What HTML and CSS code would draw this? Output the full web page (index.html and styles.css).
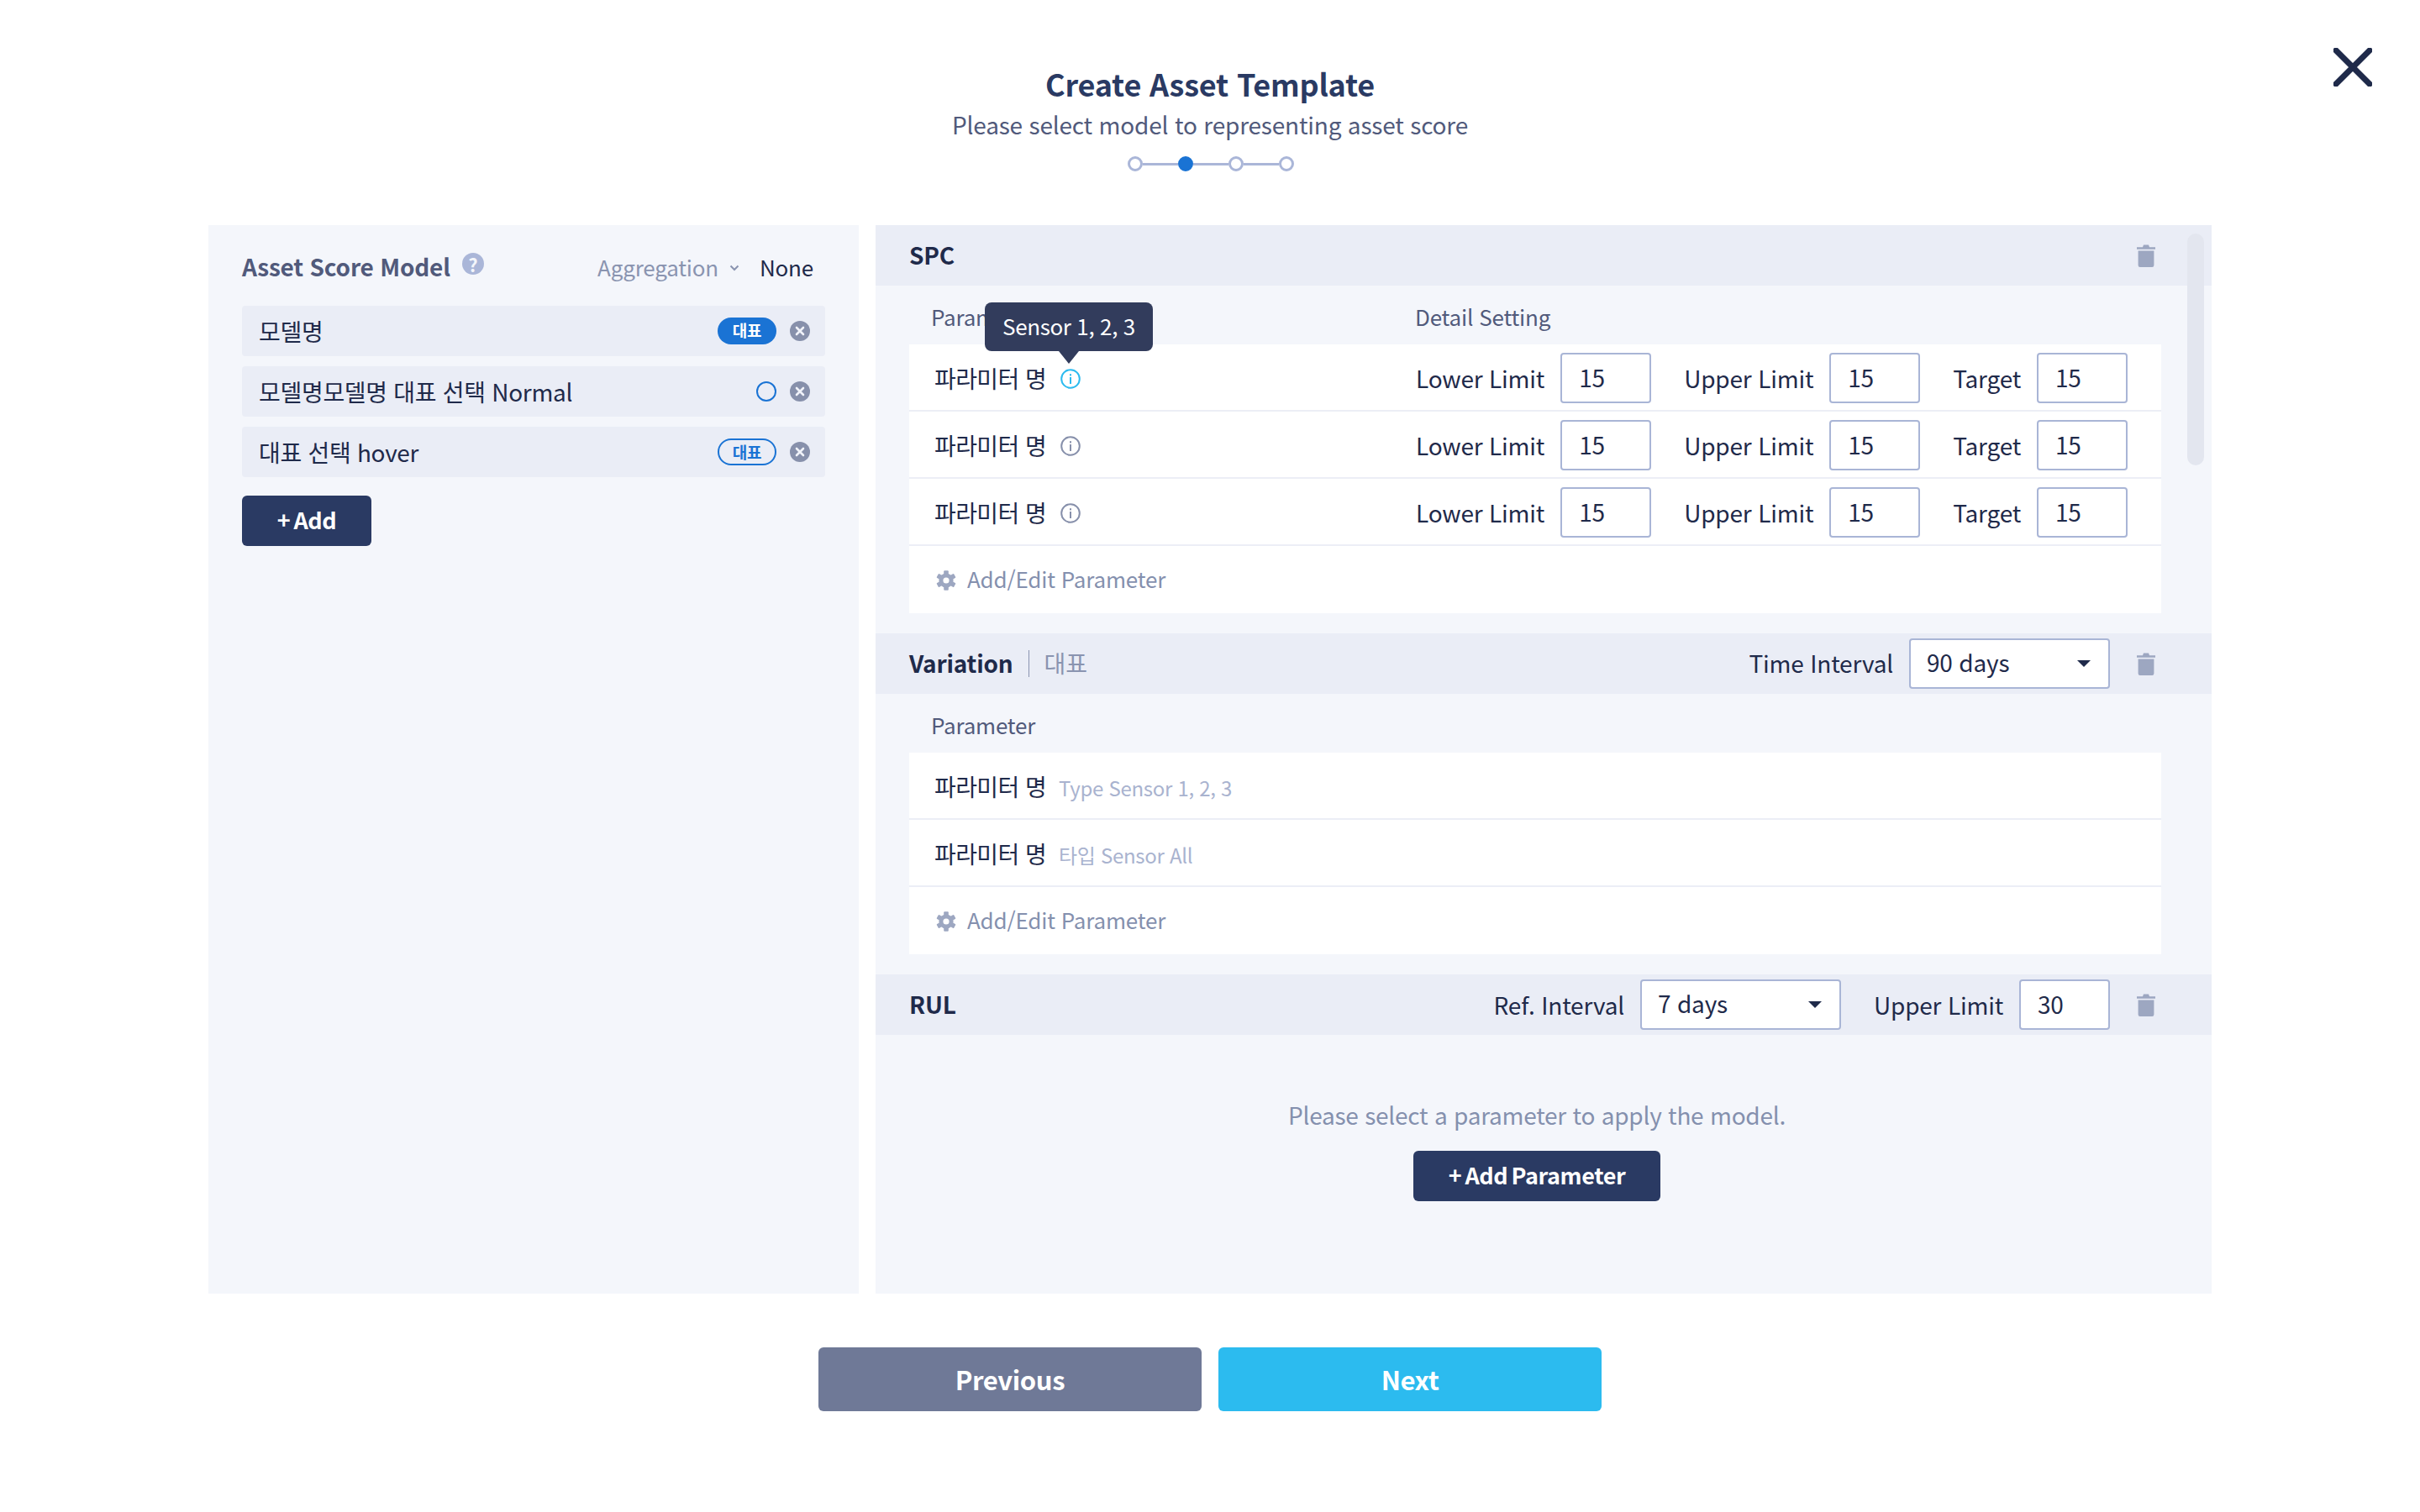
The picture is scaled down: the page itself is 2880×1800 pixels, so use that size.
FILE: index.html
```html
<!DOCTYPE html>
<html lang="ko">
<head>
<meta charset="utf-8">
<title>Create Asset Template</title>
<link rel="stylesheet" href="styles.css">
</head>
<body>
<svg class="defs" width="0" height="0" aria-hidden="true">
  <defs>
    <symbol id="trash" viewBox="0 0 22 27"><path d="M0 3.2h7L8 .6h6l1 2.6h7v2.6H0z"/><path d="M1.600 7.400h18.800v17.400a2.200 2.200 0 0 1-2.200 2.200H3.800a2.200 2.200 0 0 1-2.200-2.200z"/></symbol>
    <symbol id="gear" viewBox="0 0 24 24"><circle cx="12" cy="12" r="8.600"/><rect x="9.200" y="0.200" width="5.600" height="23.600" rx="1"/><rect x="9.200" y="0.200" width="5.600" height="23.600" rx="1" transform="rotate(60 12 12)"/><rect x="9.200" y="0.200" width="5.600" height="23.600" rx="1" transform="rotate(120 12 12)"/><circle cx="12" cy="12" r="3.600" fill="#fff"/></symbol>
    <symbol id="info" viewBox="0 0 24 24"><circle cx="12" cy="12" r="10.800" fill="none" stroke="currentColor" stroke-width="2"/><rect x="11" y="10" width="2" height="8" fill="currentColor"/><rect x="11" y="6.200" width="2" height="2.200" fill="currentColor"/></symbol>
    <symbol id="remove" viewBox="0 0 24 24"><circle cx="12" cy="12" r="12" fill="#8790ab"/><path d="M8 8l8 8M16 8l-8 8" stroke="#f0f2f9" stroke-width="2.600" stroke-linecap="round"/></symbol>
  </defs>
</svg>
<div class="page">
  <button class="close" aria-label="Close">
    <svg width="46" height="46" viewBox="0 0 46 46"><path d="M3 3l40 40M43 3L3 43" stroke="#1f2a4a" stroke-width="7" stroke-linecap="square"/></svg>
  </button>

  <header class="head">
    <h1 class="title">Create Asset Template</h1>
    <p class="subtitle">Please select model to representing asset score</p>
    <div class="steps">
      <span class="dot"></span><span class="link"></span>
      <span class="dot on"></span><span class="link"></span>
      <span class="dot"></span><span class="link"></span>
      <span class="dot"></span>
    </div>
  </header>

  <main class="content">
    <aside class="models">
      <div class="models-head">
        <span class="models-title">Asset Score Model</span>
        <span class="help">?</span>
        <span class="agg">Aggregation</span>
        <svg class="chev" width="12" height="8" viewBox="0 0 12 8"><path d="M1.500 1.500L6 6l4.500-4.500" fill="none" stroke="#8a94b0" stroke-width="2"/></svg>
        <span class="none">None</span>
      </div>
      <div class="model"><span class="model-name">모델명</span><span class="badge solid">대표</span><svg class="rm" width="24" height="24"><use href="#remove"/></svg></div>
      <div class="model"><span class="model-name">모델명모델명 대표 선택 Normal</span><span class="radio"></span><svg class="rm" width="24" height="24"><use href="#remove"/></svg></div>
      <div class="model"><span class="model-name">대표 선택 hover</span><span class="badge outline">대표</span><svg class="rm" width="24" height="24"><use href="#remove"/></svg></div>
      <button class="btn add">+ Add</button>
    </aside>

    <section class="detail">
      <div class="scroll"></div>

      <div class="bar">
        <span class="bar-title">SPC</span>
        <svg class="trash" width="22" height="27"><use href="#trash"/></svg>
      </div>
      <div class="cols"><span class="col-param">Parameter</span><span>Detail Setting</span></div>
      <div class="tooltip">Sensor 1, 2, 3</div>
      <div class="list">
        <div class="row">
          <span class="pname">파라미터 명</span><svg class="info active" width="24" height="24"><use href="#info"/></svg>
          <div class="fields">
            <label class="lbl">Lower Limit</label><input class="num" value="15">
            <label class="lbl up">Upper Limit</label><input class="num" value="15">
            <label class="lbl up">Target</label><input class="num" value="15">
          </div>
        </div>
        <div class="row">
          <span class="pname">파라미터 명</span><svg class="info" width="24" height="24"><use href="#info"/></svg>
          <div class="fields">
            <label class="lbl">Lower Limit</label><input class="num" value="15">
            <label class="lbl up">Upper Limit</label><input class="num" value="15">
            <label class="lbl up">Target</label><input class="num" value="15">
          </div>
        </div>
        <div class="row">
          <span class="pname">파라미터 명</span><svg class="info" width="24" height="24"><use href="#info"/></svg>
          <div class="fields">
            <label class="lbl">Lower Limit</label><input class="num" value="15">
            <label class="lbl up">Upper Limit</label><input class="num" value="15">
            <label class="lbl up">Target</label><input class="num" value="15">
          </div>
        </div>
        <div class="row edit"><svg class="gear" width="24" height="24"><use href="#gear"/></svg><span class="edit-text">Add/Edit Parameter</span></div>
      </div>

      <div class="bar">
        <span class="bar-title">Variation</span><span class="sep"></span><span class="rep">대표</span>
        <div class="bar-right">
          <label class="lbl raised">Time Interval</label>
          <div class="select"><span>90 days</span><i class="caret"></i></div>
        </div>
        <svg class="trash" width="22" height="27"><use href="#trash"/></svg>
      </div>
      <div class="cols"><span class="col-param">Parameter</span></div>
      <div class="list">
        <div class="row"><span class="pname">파라미터 명</span><span class="ptype">Type Sensor 1, 2, 3</span></div>
        <div class="row"><span class="pname">파라미터 명</span><span class="ptype">타입 Sensor All</span></div>
        <div class="row edit"><svg class="gear" width="24" height="24"><use href="#gear"/></svg><span class="edit-text">Add/Edit Parameter</span></div>
      </div>

      <div class="bar">
        <span class="bar-title">RUL</span>
        <div class="bar-right">
          <label class="lbl">Ref. Interval</label>
          <div class="select"><span>7 days</span><i class="caret"></i></div>
          <label class="lbl up">Upper Limit</label><input class="num" value="30">
        </div>
        <svg class="trash" width="22" height="27"><use href="#trash"/></svg>
      </div>
      <div class="empty">
        <p class="empty-text">Please select a parameter to apply the model.</p>
        <button class="btn add-param">+ Add Parameter</button>
      </div>
    </section>
  </main>

  <footer class="foot">
    <button class="cta prev">Previous</button>
    <button class="cta next">Next</button>
  </footer>
</div>
</body>
</html>
```

FILE: styles.css
```css
* { box-sizing: border-box; }
html, body { margin: 0; padding: 0; background: #fff; }
body {
  font-family: "Noto Sans CJK KR", "Noto Sans", sans-serif;
  color: #1f2a4a;
  font-size: 28px;
  letter-spacing: -0.2px;
}
.defs { position: absolute; }
button { font-family: inherit; border: 0; cursor: pointer; letter-spacing: -0.4px; }
input { font-family: inherit; letter-spacing: -0.2px; }

.page {
  position: relative;
  width: 2880px;
  height: 1800px;
  display: flex;
  flex-direction: column;
  align-items: center;
  padding-top: 75px;
}
.close {
  position: absolute;
  left: 2777px;
  top: 57px;
  padding: 0;
  width: 46px;
  height: 46px;
  background: none;
  line-height: 0;
}

/* Header */
.head { display: flex; flex-direction: column; align-items: center; height: 193px; }
.title { margin: 0; font-size: 36px; line-height: 48px; font-weight: 700; color: #2a3a63; }
.subtitle { margin: 2px 0 0; font-size: 28px; line-height: 46px; font-weight: 400; color: #515a7b; }
.steps { display: flex; align-items: center; margin-top: 15px; padding-left: 2px; }
.dot { width: 18px; height: 18px; border-radius: 50%; border: 3px solid #aab6d8; background: #fff; }
.dot.on { background: #1a73d4; border-color: #1a73d4; }
.link { width: 42px; height: 3px; background: #aab6d8; }

/* Layout */
.content { display: flex; gap: 20px; width: 2384px; height: 1272px; }
.models { width: 774px; background: #f4f6fb; padding: 0 40px; display: flex; flex-direction: column; }
.detail { position: relative; width: 1590px; background: #f4f6fb; overflow: hidden; }

/* Left panel */
.models-head { display: flex; align-items: center; height: 96px; padding-top: 2px; }
.models-title { font-size: 28px; font-weight: 700; color: #515a7b; }
.help {
  width: 26px; height: 26px; margin: -6px 0 0 14px; border-radius: 50%;
  background: #aab6d8; color: #f4f6fb; font-size: 22px; font-weight: 700;
  line-height: 26px; text-align: center;
}
.agg { margin-left: auto; color: #8a94b0; font-size: 26px; }
.chev { margin: 4px 0 0 13px; }
.none { margin: 0 14px 0 24px; color: #1f2a4a; font-size: 26px; }
.model {
  display: flex; align-items: center; height: 60px; margin-bottom: 12px;
  padding: 0 18px 0 20px; background: #eaedf6; border-radius: 4px;
}
.model-name { flex: 1; letter-spacing: -0.3px; }
.badge {
  width: 70px; height: 32px; border-radius: 16px; font-size: 19px; font-weight: 700;
  line-height: 30px; text-align: center;
}
.badge.solid { background: #1a73d4; color: #fff; }
.badge.outline { border: 2px solid #1a73d4; color: #1a73d4; line-height: 27px; }
.radio { width: 24px; height: 24px; border-radius: 50%; border: 2px solid #1a73d4; }
.rm { margin-left: 16px; }
.btn {
  background: #2a3a63; color: #fff; font-size: 27px; font-weight: 700; word-spacing: -3px;
  height: 60px; border-radius: 6px; padding: 0 0 4px;
}
.add { width: 154px; margin-top: 10px; }

/* Right panel */
.scroll {
  position: absolute; left: 1561px; top: 10px; width: 20px; height: 276px;
  border-radius: 10px; background: #e3e6ef;
}
.bar {
  display: flex; align-items: center; height: 72px; padding: 0 67px 0 40px;
  background: #eaedf6;
}
.bar-title { font-size: 28px; font-weight: 700; color: #1f2a4a; padding-bottom: 3px; }
.sep { width: 1px; height: 32px; margin: 0 18px; background: #8a94b0; }
.rep { color: #8a94b0; padding-bottom: 2px; }
.bar-right { display: flex; align-items: center; margin-left: auto; }
.trash { margin-left: 32px; fill: #9da7c1; }
.bar > .trash:nth-child(2) { margin-left: auto; }
.cols { display: flex; align-items: center; height: 70px; padding: 2px 0 0 66px; color: #515a7b; font-size: 26px; }
.col-param { width: 576px; }
.list { margin: 0 60px 24px 40px; background: #fff; }
.row { display: flex; align-items: center; height: 80px; padding: 2px 40px 0 30px; border-bottom: 2px solid #eceef6; }
.row:last-child { border-bottom: 0; padding-top: 0; }
.pname { color: #1f2a4a; letter-spacing: -0.6px; }
.info { margin: 2px 0 0 17px; color: #8790ab; }
.info.active { color: #2cbbef; }
.fields { display: flex; align-items: center; margin-left: auto; }
.lbl { font-size: 28px; color: #1f2a4a; margin-right: 19px; }
.lbl.up { margin-left: 39px; }
.lbl.raised { padding-bottom: 3px; }
.num {
  width: 108px; height: 60px; padding: 0 0 2px 20px; border: 2px solid #a9b5d6; border-radius: 4px;
  background: #fff; color: #1f2a4a; font-size: 28px; outline: none;
}
.select {
  display: flex; align-items: center; justify-content: space-between;
  width: 239px; height: 60px; padding: 0 21px 4px 19px; border: 2px solid #a9b5d6; border-radius: 4px;
  background: #fff; font-size: 28px;
}
.caret { width: 0; height: 0; margin-top: 4px; border: 8px solid transparent; border-top: 8px solid #1f2a4a; border-bottom: 0; }
.edit { color: #8490ae; padding-left: 32px; font-size: 26px; }
.edit-text { padding-bottom: 4px; }
.gear { fill: #9da7c1; margin: 2px 13px 0 0; }
.ptype { margin-left: 15px; font-size: 24px; color: #a9b3cf; letter-spacing: -0.3px; padding-top: 2px; }

.tooltip {
  position: absolute; left: 130px; top: 92px; width: 200px; height: 58px;
  background: #323c5c; color: #fff; border-radius: 8px; font-size: 26px; letter-spacing: -0.4px;
  line-height: 55px; text-align: center;
}
.tooltip::after {
  content: ""; position: absolute; left: 88px; top: 58px; width: 0; height: 0;
  border: 12.500px solid transparent; border-top: 15px solid #323c5c; border-bottom: 0;
}

.empty { display: flex; flex-direction: column; align-items: center; padding: 73px 16px 0 0; }
.empty-text { margin: 0; font-size: 28px; line-height: 44px; color: #8490ae; letter-spacing: -0.25px; }
.add-param { width: 294px; margin-top: 21px; }

/* Footer */
.foot { display: flex; gap: 20px; margin-top: 64px; }
.cta { width: 456px; height: 76px; border-radius: 6px; padding: 0 0 2px; color: #fff; font-size: 31px; font-weight: 700; }
.prev { background: #6f7997; }
.next { background: #2cbbef; }
```
